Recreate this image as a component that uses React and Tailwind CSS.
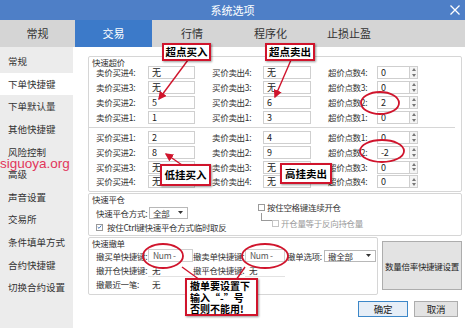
import React from 'react';

const cjk = "font-['Noto_Sans_CJK_SC','Liberation_Sans',sans-serif]";

const sideItems = ['常规', '下单快捷键', '下单默认量', '其他快捷键', '风险控制', '高级', '声音设置', '交易所', '条件填单方式', '合约快捷键', '切换合约设置'];

const tabs = [
    { name: '常规', w: 'w-[75px]' },
    { name: '交易', w: 'w-[77px]', active: true },
    { name: '行情', w: 'w-[80px]' },
    { name: '程序化', w: 'w-[77px]' },
    { name: '止损止盈', w: 'w-[80px]' },
];

const topRows = [
    ['卖价买进4:', '无', '买价卖出4:', '无', '超价点数4:', '0'],
    ['卖价买进3:', '无', '买价卖出3:', '无', '超价点数3:', '0'],
    ['卖价买进2:', '5', '买价卖出2:', '6', '超价点数2:', '2'],
    ['卖价买进1:', '1', '买价卖出1:', '3', '超价点数1:', '0'],
];

const bottomRows = [
    ['买价买进1:', '2', '卖价卖出1:', '4', '超价点数1:', '0'],
    ['买价买进2:', '8', '卖价卖出2:', '9', '超价点数2:', '-2'],
    ['买价买进3:', '无', '卖价卖出3:', '无', '超价点数3:', '0'],
    ['买价买进4:', '无', '卖价卖出4:', '无', '超价点数4:', '0'],
];

const Box = ({ value, w }) => (
    <div className={`${w} h-[13px] border border-[#cfcfcf] bg-white pl-[3px] text-[9px] leading-[11px] text-[#222]`}>{value}</div>
);

const Spinner = () => (
    <div className="w-[8px] h-[13px] border border-l-0 border-[#cfcfcf] bg-[#f4f4f4] flex flex-col items-center justify-around">
        <svg width="4" height="3" viewBox="0 0 4 3"><path d="M0 3 L2 0 L4 3 Z" fill="#777" /></svg>
        <svg width="4" height="3" viewBox="0 0 4 3"><path d="M0 0 L2 3 L4 0 Z" fill="#777" /></svg>
    </div>
);

const PriceRow = ({ row }) => (
    <div className="flex items-center h-[13px]">
        <div className="w-[52px] leading-[13px]">{row[0]}</div>
        <Box value={row[1]} w="w-[47px]" />
        <div className="w-[17px]" />
        <div className="w-[51px] leading-[13px]">{row[2]}</div>
        <Box value={row[3]} w="w-[48px]" />
        <div className="w-[17px]" />
        <div className="w-[49px] leading-[13px]">{row[4]}</div>
        <Box value={row[5]} w="w-[33px]" />
        <Spinner />
    </div>
);

const Check = ({ checked, dim }) => (
    <div className={`w-[7px] h-[7px] border ${dim ? 'border-[#c4c4c4]' : 'border-[#9a9a9a]'} bg-white flex items-center justify-center`}>
        {checked && (
            <svg width="6" height="6" viewBox="0 0 6 6"><path d="M0.8 3 L2.4 4.6 L5.2 1.2" stroke="#3a6fb5" strokeWidth="1.1" fill="none" /></svg>
        )}
    </div>
);

const Select = ({ value, w }) => (
    <div className={`${w} h-[12px] border border-[#b8b8b8] bg-white flex items-center justify-between pl-[3px] pr-[4px] leading-[10px]`}>
        <span>{value}</span>
        <svg width="5" height="3" viewBox="0 0 5 3"><path d="M0 0 L2.5 3 L5 0 Z" fill="#333" /></svg>
    </div>
);

const Callout = ({ className, children }) => (
    <div className={`absolute bg-white border-2 border-[#d0142c] shadow-[1px_1px_2px_rgba(0,0,0,0.4)] font-bold text-black text-[10.5px] whitespace-nowrap ${className}`}>
        {children}
    </div>
);

export default function App() {
    return (
        <div className={`relative w-[465px] h-[328px] overflow-hidden bg-white text-[#333] ${cjk}`}>
            {/* title bar */}
            <div className="relative h-[20px] bg-[#4e7fc7] flex items-center justify-center text-white text-[11px]">
                系统选项
                <svg className="absolute right-[4px] top-[4px]" width="12" height="12" viewBox="0 0 12 12">
                    <path d="M1.5 1.5 L10.5 10.5 M10.5 1.5 L1.5 10.5" stroke="#fff" strokeWidth="1.3" />
                </svg>
            </div>

            {/* tabs */}
            <div className="h-[27px] bg-[#d5d5d5] flex text-[11px] text-[#333]">
                {tabs.map((t) => (
                    <div key={t.name} className={`${t.w} flex items-center justify-center ${t.active ? 'bg-[#3c7ac9] text-white' : ''}`}>
                        {t.name}
                    </div>
                ))}
            </div>

            <div className="flex h-[281px]">
                {/* sidebar */}
                <div className="w-[73px] bg-[#ececec] pt-[3px] text-[9.5px] text-[#333] whitespace-nowrap">
                    {sideItems.map((s, i) => (
                        <div key={s} className={`h-[22.6px] flex items-center pl-[8px] ${i === 1 ? 'bg-white' : ''}`}>{s}</div>
                    ))}
                </div>

                {/* main */}
                <div className="flex-1 pl-[15px] pr-[3px] pt-[9px] text-[8.5px] tracking-[-0.3px] text-[#333] whitespace-nowrap">
                    {/* 快速超价 */}
                    <div className="border border-[#d6d6d6] rounded-[2px] pl-[7px] pb-[3px]">
                        <div className="h-[9px] leading-[10px] -ml-[4px]">快速超价</div>
                        <div className="flex flex-col gap-[2px]">
                            {topRows.map((r) => <PriceRow key={r[0]} row={r} />)}
                        </div>
                        <div className="h-px bg-[#d6d6d6] mt-[3px] -ml-[7px] mr-[6px]" />
                        <div className="flex flex-col gap-[1.8px] mt-[3px]">
                            {bottomRows.map((r) => <PriceRow key={r[0]} row={r} />)}
                        </div>
                    </div>

                    {/* 快速平仓 */}
                    <div className="mt-[1px] h-[43px] border border-[#d6d6d6] rounded-[2px] pl-[7px] flex">
                        <div className="w-[162px]">
                            <div className="h-[10px] leading-[10px] -ml-[4px]">快速平仓</div>
                            <div className="flex items-center h-[15px] mt-[1px]">
                                <div className="w-[53px]">快速平仓方式:</div>
                                <Select value="全部" w="w-[39px]" />
                            </div>
                            <div className="flex items-center gap-[4px] h-[14px]">
                                <Check checked />
                                <span>按住Ctrl键快速平仓方式临时取反</span>
                            </div>
                        </div>
                        <div className="pt-[7px]">
                            <div className="flex items-center gap-[2px] h-[12px]">
                                <Check />
                                <span>按住空格键连续开仓</span>
                            </div>
                            <div className="flex items-start h-[14px] text-[#9a9a9a]">
                                <div className="w-[11px] h-[8px] ml-[3px] border-l border-b border-[#9a9a9a]" />
                                <div className="flex items-center gap-[2px] mt-[4px]">
                                    <Check dim />
                                    <span>开仓量等于反向持仓量</span>
                                </div>
                            </div>
                        </div>
                    </div>

                    {/* 快速撤单 */}
                    <div className="mt-[1px] flex gap-[4px]">
                        <div className="w-[290px] h-[58px] border border-[#d6d6d6] rounded-[2px] pl-[7px]">
                            <div className="h-[11px] leading-[10px] -ml-[4px]">快速撤单</div>
                            <div className="flex items-center h-[13px]">
                                <div className="w-[52px]">撤买单快捷键:</div>
                                <div className="w-[45px] h-[13px] border border-[#cfcfcf] pl-[4px] leading-[11px] text-[#555]">Num -</div>
                                <div className="w-[52px]">撤卖单快捷键:</div>
                                <div className="w-[40px] h-[13px] border border-[#cfcfcf] pl-[4px] leading-[11px] text-[#555]">Num -</div>
                                <div className="ml-[2px] w-[37px]">撤单选项:</div>
                                <Select value="撤全部" w="w-[52px]" />
                            </div>
                            <div className="flex items-center h-[14px] mt-[1px]">
                                <div className="w-[52px]">撤开仓快捷键:</div>
                                <div className="w-[45px] h-[13px] border-b border-[#e2e2e2] pl-[4px] leading-[13px]">无</div>
                                <div className="w-[52px]">撤平仓快捷键:</div>
                                <div className="w-[40px] h-[13px] border-b border-[#e2e2e2] pl-[4px] leading-[13px]">无</div>
                            </div>
                            <div className="flex items-center h-[13px]">
                                <div className="w-[52px]">撤最近一笔:</div>
                                <div className="pl-[4px]">无</div>
                            </div>
                        </div>
                        <div className="w-[80px] h-[49px] mt-[4px] border border-[#adadad] bg-[#e3e3e3] flex items-center justify-center text-[#222]">
                            数量倍率快捷键设置
                        </div>
                    </div>

                    {/* buttons */}
                    <div className="flex justify-end gap-[6px] mt-[6px] pr-[4px]">
                        <div className="w-[50px] h-[16px] border border-[#3c87c8] bg-[#e6eef7] flex items-center justify-center text-[9.5px] text-[#222]">确定</div>
                        <div className="w-[44px] h-[16px] border border-[#adadad] bg-[#e3e3e3] flex items-center justify-center text-[9.5px] text-[#222]">取消</div>
                    </div>
                </div>
            </div>

            {/* watermark */}
            <div className="absolute left-[0px] top-[154px] font-['Liberation_Sans',sans-serif] text-[13.5px] text-[#e2365b]">siguoya.org</div>

            {/* annotation drawings */}
            <svg className="absolute inset-0 pointer-events-none" width="465" height="328" viewBox="0 0 465 328">
                <defs>
                    <marker id="ah" markerWidth="6" markerHeight="6" refX="5" refY="3" orient="auto">
                        <path d="M0 0 L6 3 L0 6 Z" fill="#d0142c" />
                    </marker>
                </defs>
                <g stroke="#d0142c" strokeWidth="1.4" fill="none">
                    <line x1="188" y1="60" x2="159" y2="99" markerEnd="url(#ah)" />
                    <line x1="291" y1="60" x2="275" y2="97" markerEnd="url(#ah)" />
                    <line x1="182" y1="165" x2="166" y2="154" markerEnd="url(#ah)" />
                    <line x1="182" y1="267" x2="200" y2="280" />
                    <line x1="245" y1="267" x2="236" y2="280" />
                    <ellipse cx="380" cy="103" rx="19" ry="11" strokeWidth="1.8" />
                    <ellipse cx="382" cy="151" rx="22" ry="11" strokeWidth="1.8" />
                    <ellipse cx="163" cy="256" rx="20" ry="12" strokeWidth="1.8" />
                    <ellipse cx="265" cy="256" rx="23" ry="12" strokeWidth="1.8" />
                </g>
            </svg>

            {/* callouts */}
            <Callout className="left-[162px] top-[43px] w-[49px] h-[18px] flex items-center justify-center">超点买入</Callout>
            <Callout className="left-[265px] top-[43px] w-[50px] h-[18px] flex items-center justify-center">超点卖出</Callout>
            <Callout className="left-[160px] top-[164px] w-[51px] h-[22px] flex items-center justify-center">低挂买入</Callout>
            <Callout className="left-[280px] top-[163px] w-[52px] h-[21px] flex items-center justify-center">高挂卖出</Callout>
            <Callout className="left-[185px] top-[278px] w-[73px] h-[38px] px-[3px] text-[10px] leading-[11.5px]">
                <div>撤单要设置下</div>
                <div>输入“-”号</div>
                <div>否则不能用!</div>
            </Callout>
        </div>
    );
}
